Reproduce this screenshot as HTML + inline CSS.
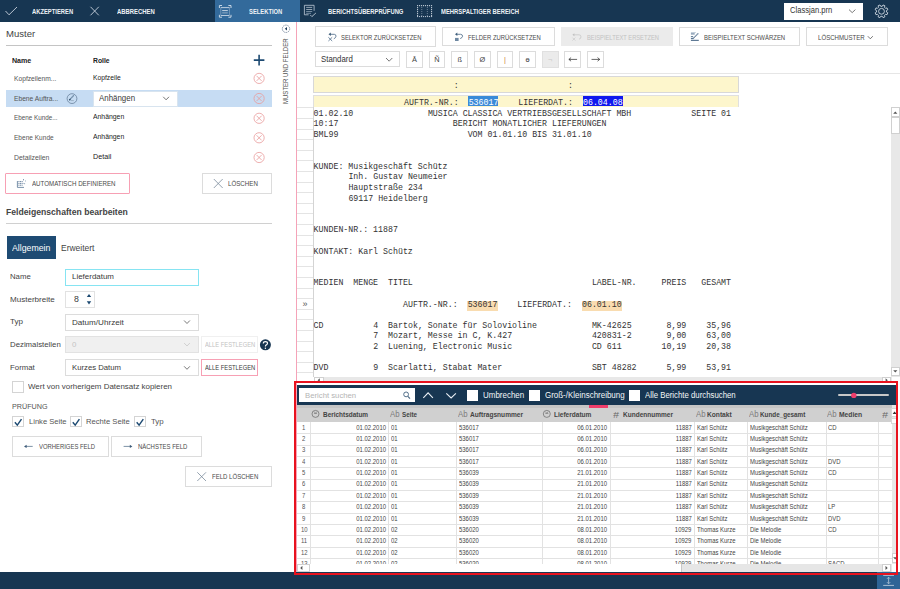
<!DOCTYPE html><html><head><meta charset='utf-8'><style>
*{margin:0;padding:0;box-sizing:border-box}
html,body{width:900px;height:589px;overflow:hidden;background:#fff;font-family:'Liberation Sans',sans-serif}
div{position:absolute}
.t{white-space:pre;line-height:1}
svg{position:absolute;overflow:visible}
</style></head><body><div style="left:0px;top:0px;width:900px;height:22.3px;background:#173652"></div>
<div style="left:215px;top:0px;width:85px;height:22.3px;background:#336a9b"></div>
<svg style="left:0;top:0" width="40" height="22"><path d="M5.5 11 L9 14.8 L17 7" fill="none" stroke="#c9d3de" stroke-width="0.9"/></svg>
<div class="t" style="left:32.2px;top:7.66px;font-size:6.9px;line-height:7.93px;color:#eef2f6;font-weight:700;font-family:'Liberation Sans';transform:scaleX(0.846);transform-origin:0 0;">AKZEPTIEREN</div>
<svg style="left:0;top:0" width="110" height="22"><path d="M90.5 6.8 L98.8 15.3 M98.8 6.8 L90.5 15.3" fill="none" stroke="#c9d3de" stroke-width="0.9"/></svg>
<div class="t" style="left:117.2px;top:7.66px;font-size:6.9px;line-height:7.93px;color:#eef2f6;font-weight:700;font-family:'Liberation Sans';transform:scaleX(0.857);transform-origin:0 0;">ABBRECHEN</div>
<svg style="left:0;top:0" width="240" height="22"><path d="M219.4 8 V5.5 H222 M228.4 5.5 H231 V8 M231 14.8 V17.2 H228.4 M222 17.2 H219.4 V14.8" fill="none" stroke="#d8e2ec" stroke-width="0.9"/><path d="M220.8 7.2 V15.8 M229.4 7.2 V15.8" stroke="#9fb6cc" stroke-width="0.6"/><path d="M221 7.6 H229.2 M221 15.5 H229.2" stroke="#c8d6e4" stroke-width="0.9"/><path d="M222.2 10.6 H227.8" stroke="#d8e2ec" stroke-width="0.9"/><path d="M222.2 12.9 H227.8" stroke="#9fb6cc" stroke-width="0.9"/></svg>
<div class="t" style="left:249.4px;top:7.66px;font-size:6.9px;line-height:7.93px;color:#eef2f6;font-weight:700;font-family:'Liberation Sans';transform:scaleX(0.845);transform-origin:0 0;">SELEKTION</div>
<svg style="left:0;top:0" width="340" height="22"><path d="M308.6 14.8 H304.4 V5.3 H314.1 V10.8" fill="none" stroke="#c0ccd8" stroke-width="0.8"/><path d="M306.2 7.4 H312.2 M306.2 9.5 H312.2" stroke="#c8d2dc" stroke-width="0.7"/><path d="M306.2 11.5 H312.2 M306.2 13.3 H311" stroke="#8ea2b6" stroke-width="0.8"/><path d="M310.3 15 L311.9 16.6 L315.9 13" fill="none" stroke="#d0dae4" stroke-width="0.8"/></svg>
<div class="t" style="left:327.6px;top:7.66px;font-size:6.9px;line-height:7.93px;color:#eef2f6;font-weight:700;font-family:'Liberation Sans';transform:scaleX(0.849);transform-origin:0 0;">BERICHTSÜBERPRÜFUNG</div>
<svg style="left:0;top:0" width="440" height="22"><rect x="417.00" y="5.1" width="1.1" height="1.1" fill="#c8d2dc"/><rect x="417.00" y="16.0" width="1.1" height="1.1" fill="#aebccb"/><rect x="419.00" y="5.1" width="1.1" height="1.1" fill="#c8d2dc"/><rect x="419.00" y="16.0" width="1.1" height="1.1" fill="#aebccb"/><rect x="421.00" y="5.1" width="1.1" height="1.1" fill="#c8d2dc"/><rect x="421.00" y="16.0" width="1.1" height="1.1" fill="#aebccb"/><rect x="423.00" y="5.1" width="1.1" height="1.1" fill="#c8d2dc"/><rect x="423.00" y="16.0" width="1.1" height="1.1" fill="#aebccb"/><rect x="425.00" y="5.1" width="1.1" height="1.1" fill="#c8d2dc"/><rect x="425.00" y="16.0" width="1.1" height="1.1" fill="#aebccb"/><rect x="427.00" y="5.1" width="1.1" height="1.1" fill="#c8d2dc"/><rect x="427.00" y="16.0" width="1.1" height="1.1" fill="#aebccb"/><rect x="429.00" y="5.1" width="1.1" height="1.1" fill="#c8d2dc"/><rect x="429.00" y="16.0" width="1.1" height="1.1" fill="#aebccb"/><rect x="431.00" y="5.1" width="1.1" height="1.1" fill="#c8d2dc"/><rect x="431.00" y="16.0" width="1.1" height="1.1" fill="#aebccb"/><rect x="417.0" y="7.10" width="1.1" height="1.1" fill="#c8d2dc"/><rect x="431.0" y="7.10" width="1.1" height="1.1" fill="#c8d2dc"/><rect x="421.2" y="7.10" width="1.1" height="0.9" fill="#6f8499"/><rect x="426.8" y="7.10" width="1.1" height="0.9" fill="#6f8499"/><rect x="417.0" y="9.10" width="1.1" height="1.1" fill="#c8d2dc"/><rect x="431.0" y="9.10" width="1.1" height="1.1" fill="#c8d2dc"/><rect x="421.2" y="9.10" width="1.1" height="0.9" fill="#6f8499"/><rect x="426.8" y="9.10" width="1.1" height="0.9" fill="#6f8499"/><rect x="417.0" y="11.10" width="1.1" height="1.1" fill="#c8d2dc"/><rect x="431.0" y="11.10" width="1.1" height="1.1" fill="#c8d2dc"/><rect x="421.2" y="11.10" width="1.1" height="0.9" fill="#6f8499"/><rect x="426.8" y="11.10" width="1.1" height="0.9" fill="#6f8499"/><rect x="417.0" y="13.10" width="1.1" height="1.1" fill="#c8d2dc"/><rect x="431.0" y="13.10" width="1.1" height="1.1" fill="#c8d2dc"/><rect x="421.2" y="13.10" width="1.1" height="0.9" fill="#6f8499"/><rect x="426.8" y="13.10" width="1.1" height="0.9" fill="#6f8499"/><rect x="417.0" y="15.10" width="1.1" height="1.1" fill="#c8d2dc"/><rect x="431.0" y="15.10" width="1.1" height="1.1" fill="#c8d2dc"/><rect x="421.2" y="15.10" width="1.1" height="0.9" fill="#6f8499"/><rect x="426.8" y="15.10" width="1.1" height="0.9" fill="#6f8499"/></svg>
<div class="t" style="left:440.8px;top:7.66px;font-size:6.9px;line-height:7.93px;color:#eef2f6;font-weight:700;font-family:'Liberation Sans';transform:scaleX(0.851);transform-origin:0 0;">MEHRSPALTIGER BEREICH</div>
<div style="left:784px;top:3px;width:79px;height:16.5px;background:#fff"></div>
<div class="t" style="left:789.8px;top:6.18px;font-size:8.2px;line-height:9.43px;color:#333;font-weight:400;font-family:'Liberation Sans';transform:scaleX(0.929);transform-origin:0 0;">Classjan.prn</div>
<svg style="left:0;top:0" width="900" height="22"><path d="M849 9.6 L852.2 12.6 L855.4 9.6" fill="none" stroke="#555" stroke-width="0.8"/></svg>
<svg style="left:0;top:0" width="900" height="22"><path d="M882.24 6.35 L883.02 4.98 L884.90 5.76 L884.47 7.28 L885.52 8.33 L887.04 7.90 L887.82 9.78 L886.45 10.56 L886.45 12.04 L887.82 12.82 L887.04 14.70 L885.52 14.27 L884.47 15.32 L884.90 16.84 L883.02 17.62 L882.24 16.25 L880.76 16.25 L879.98 17.62 L878.10 16.84 L878.53 15.32 L877.48 14.27 L875.96 14.70 L875.18 12.82 L876.55 12.04 L876.55 10.56 L875.18 9.78 L875.96 7.90 L877.48 8.33 L878.53 7.28 L878.10 5.76 L879.98 4.98 L880.76 6.35 Z" fill="none" stroke="#d8e0e8" stroke-width="0.85" stroke-linejoin="round"/><circle cx="881.5" cy="11.3" r="2.9" fill="none" stroke="#d8e0e8" stroke-width="0.85"/></svg>
<div class="t" style="left:6px;top:28.99px;font-size:9.4px;line-height:10.81px;color:#444;font-weight:400;font-family:'Liberation Sans';transform:scaleX(1.018);transform-origin:0 0;">Muster</div>
<div style="left:6px;top:45px;width:266px;height:1px;background:#c4c4c4"></div>
<div class="t" style="left:11.7px;top:57.06px;font-size:7px;line-height:8.05px;color:#222;font-weight:700;font-family:'Liberation Sans';transform:scaleX(1.013);transform-origin:0 0;">Name</div>
<div class="t" style="left:93px;top:57.06px;font-size:7px;line-height:8.05px;color:#222;font-weight:700;font-family:'Liberation Sans';transform:scaleX(0.969);transform-origin:0 0;">Rolle</div>
<svg style="left:0;top:0" width="1" height="1"><path d="M259.1 54.8 V65.4 M253.8 60.1 H264.4" stroke="#1d4a72" stroke-width="1.6"/></svg>
<div style="left:6px;top:90px;width:265.5px;height:17px;background:#c6dcf3"></div>
<div style="left:93px;top:90.5px;width:84.5px;height:16px;background:#fff;border:1px solid #d8e4ef"></div>
<div class="t" style="left:98.7px;top:93.98px;font-size:8.2px;line-height:9.43px;color:#3a3a3a;font-weight:400;font-family:'Liberation Sans';transform:scaleX(0.965);transform-origin:0 0;">Anhängen</div>
<svg style="left:0;top:0" width="1" height="1"><path d="M163.2 96.8 L166.1 99.8 L169.0 96.8" fill="none" stroke="#555" stroke-width="0.8"/></svg>
<svg style="left:0;top:0" width="1" height="1"><circle cx="72" cy="98.6" r="4.9" fill="none" stroke="#5c7690" stroke-width="0.7"/><path d="M69.6 99.8 L73.8 95.3" stroke="#4c6a86" stroke-width="1.2" stroke-dasharray="0.8 0.3"/><path d="M69.3 100.3 L70.3 99.3" stroke="#2c4a66" stroke-width="1.3"/><path d="M70.8 100.6 H73.8" stroke="#7d93a8" stroke-width="0.6"/></svg>
<div class="t" style="left:14.3px;top:75.07px;font-size:7px;line-height:8.05px;color:#555;font-weight:400;font-family:'Liberation Sans';transform:scaleX(0.955);transform-origin:0 0;">Kopfzeilenm...</div>
<div class="t" style="left:93px;top:74.07px;font-size:7px;line-height:8.05px;color:#222;font-weight:400;font-family:'Liberation Sans';transform:scaleX(0.961);transform-origin:0 0;">Kopfzeile</div>
<div class="t" style="left:14.3px;top:94.57px;font-size:7px;line-height:8.05px;color:#555;font-weight:400;font-family:'Liberation Sans';transform:scaleX(0.952);transform-origin:0 0;">Ebene Auftra...</div>
<div class="t" style="left:14.3px;top:114.47px;font-size:7px;line-height:8.05px;color:#555;font-weight:400;font-family:'Liberation Sans';transform:scaleX(0.904);transform-origin:0 0;">Ebene Kunde...</div>
<div class="t" style="left:93px;top:113.47px;font-size:7px;line-height:8.05px;color:#222;font-weight:400;font-family:'Liberation Sans';transform:scaleX(0.977);transform-origin:0 0;">Anhängen</div>
<div class="t" style="left:14.3px;top:134.16px;font-size:7px;line-height:8.05px;color:#555;font-weight:400;font-family:'Liberation Sans';transform:scaleX(0.935);transform-origin:0 0;">Ebene Kunde</div>
<div class="t" style="left:93px;top:133.16px;font-size:7px;line-height:8.05px;color:#222;font-weight:400;font-family:'Liberation Sans';transform:scaleX(0.977);transform-origin:0 0;">Anhängen</div>
<div class="t" style="left:14.3px;top:153.66px;font-size:7px;line-height:8.05px;color:#555;font-weight:400;font-family:'Liberation Sans';transform:scaleX(0.978);transform-origin:0 0;">Detailzeilen</div>
<div class="t" style="left:93px;top:152.66px;font-size:7px;line-height:8.05px;color:#222;font-weight:400;font-family:'Liberation Sans';transform:scaleX(1.023);transform-origin:0 0;">Detail</div>
<svg style="left:0;top:0" width="1" height="1"><circle cx="259.1" cy="78.4" r="5.1" fill="none" stroke="#e89a9a" stroke-width="0.8"/><path d="M256.55 75.85000000000001 L261.65000000000003 80.95 M261.65000000000003 75.85000000000001 L256.55 80.95" stroke="#e89a9a" stroke-width="0.8"/></svg>
<svg style="left:0;top:0" width="1" height="1"><circle cx="259.1" cy="98.5" r="5.1" fill="none" stroke="#e89a9a" stroke-width="0.8"/><path d="M256.55 95.95 L261.65000000000003 101.05 M261.65000000000003 95.95 L256.55 101.05" stroke="#e89a9a" stroke-width="0.8"/></svg>
<svg style="left:0;top:0" width="1" height="1"><circle cx="259.1" cy="118.3" r="5.1" fill="none" stroke="#e89a9a" stroke-width="0.8"/><path d="M256.55 115.75 L261.65000000000003 120.85 M261.65000000000003 115.75 L256.55 120.85" stroke="#e89a9a" stroke-width="0.8"/></svg>
<svg style="left:0;top:0" width="1" height="1"><circle cx="259.1" cy="137.8" r="5.1" fill="none" stroke="#e89a9a" stroke-width="0.8"/><path d="M256.55 135.25 L261.65000000000003 140.35000000000002 M261.65000000000003 135.25 L256.55 140.35000000000002" stroke="#e89a9a" stroke-width="0.8"/></svg>
<svg style="left:0;top:0" width="1" height="1"><circle cx="259.1" cy="157.5" r="5.1" fill="none" stroke="#e89a9a" stroke-width="0.8"/><path d="M256.55 154.95 L261.65000000000003 160.05 M261.65000000000003 154.95 L256.55 160.05" stroke="#e89a9a" stroke-width="0.8"/></svg>
<div style="left:5.2px;top:173px;width:124.8px;height:20.5px;border:1px solid #f7a0b4;border-radius:1px"></div>
<svg style="left:0;top:0" width="1" height="1"><path d="M17.4 181 V187.4 H24" fill="none" stroke="#6a84a0" stroke-width="0.9"/><path d="M18.4 181.6 H23.2 M18.4 183.4 H23.6 M18.4 185.2 H22.6" stroke="#6a84a0" stroke-width="1" stroke-dasharray="1.1 0.5"/><path d="M23.5 179 V180.4 M25.2 181.2 L26 180.6 M24.6 183.2 V184.2" stroke="#6a84a0" stroke-width="0.8"/></svg>
<div class="t" style="left:31.9px;top:180.36px;font-size:6.9px;line-height:7.93px;color:#4a4a4a;font-weight:400;font-family:'Liberation Sans';transform:scaleX(0.897);transform-origin:0 0;">AUTOMATISCH DEFINIEREN</div>
<div style="left:202.2px;top:173px;width:69.8px;height:20.5px;border:1px solid #dcdcdc"></div>
<svg style="left:0;top:0" width="1" height="1"><path d="M213.8 179 L222.70000000000002 188 M222.70000000000002 179 L213.8 188" stroke="#7a8a9a" stroke-width="0.8"/></svg>
<div class="t" style="left:228px;top:180.36px;font-size:6.9px;line-height:7.93px;color:#4a4a4a;font-weight:400;font-family:'Liberation Sans';transform:scaleX(0.897);transform-origin:0 0;">LÖSCHEN</div>
<div class="t" style="left:6px;top:208.42px;font-size:8.6px;line-height:9.89px;color:#444;font-weight:700;font-family:'Liberation Sans';transform:scaleX(1.004);transform-origin:0 0;">Feldeigenschaften bearbeiten</div>
<div style="left:6px;top:223px;width:266px;height:1px;background:#d0d0d0"></div>
<div style="left:7px;top:236.2px;width:48.5px;height:22.6px;background:#1e4b73"></div>
<div class="t" style="left:12.4px;top:243.90px;font-size:8.4px;line-height:9.66px;color:#fff;font-weight:400;font-family:'Liberation Sans';transform:scaleX(1.043);transform-origin:0 0;">Allgemein</div>
<div class="t" style="left:61.4px;top:243.90px;font-size:8.4px;line-height:9.66px;color:#444;font-weight:400;font-family:'Liberation Sans';transform:scaleX(1.009);transform-origin:0 0;">Erweitert</div>
<div class="t" style="left:10.1px;top:272.25px;font-size:7.9px;line-height:9.08px;color:#444;font-weight:400;font-family:'Liberation Sans';transform:scaleX(0.986);transform-origin:0 0;">Name</div>
<div class="t" style="left:10.1px;top:294.55px;font-size:7.9px;line-height:9.08px;color:#444;font-weight:400;font-family:'Liberation Sans';transform:scaleX(1.021);transform-origin:0 0;">Musterbreite</div>
<div class="t" style="left:10.1px;top:317.05px;font-size:7.9px;line-height:9.08px;color:#444;font-weight:400;font-family:'Liberation Sans';transform:scaleX(1.021);transform-origin:0 0;">Typ</div>
<div class="t" style="left:10.1px;top:340.35px;font-size:7.9px;line-height:9.08px;color:#444;font-weight:400;font-family:'Liberation Sans';transform:scaleX(0.989);transform-origin:0 0;">Dezimalstellen</div>
<div class="t" style="left:10.1px;top:362.95px;font-size:7.9px;line-height:9.08px;color:#444;font-weight:400;font-family:'Liberation Sans';transform:scaleX(0.991);transform-origin:0 0;">Format</div>
<div style="left:65.2px;top:268.5px;width:133.7px;height:17.1px;border:1px solid #86e4f2"></div>
<div class="t" style="left:72.3px;top:272.45px;font-size:7.9px;line-height:9.08px;color:#3a3a3a;font-weight:400;font-family:'Liberation Sans';transform:scaleX(1.007);transform-origin:0 0;">Lieferdatum</div>
<div style="left:65.2px;top:291.2px;width:29.4px;height:17.1px;border:1px solid #e2e2e2"></div>
<div class="t" style="left:73.6px;top:294.52px;font-size:8.6px;line-height:9.89px;color:#3a3a3a;font-weight:400;font-family:'Liberation Sans';transform:scaleX(1.020);transform-origin:0 0;">8</div>
<svg style="left:0;top:0" width="1" height="1"><path d="M86.8 297 L89 294 L91.2 297 Z M86.8 301.3 L89 304.4 L91.2 301.3 Z" fill="#1d4a72"/></svg>
<div style="left:65.2px;top:314.4px;width:133.7px;height:16.2px;border:1px solid #dcdcdc"></div>
<div class="t" style="left:71.8px;top:317.66px;font-size:8px;line-height:9.20px;color:#3a3a3a;font-weight:400;font-family:'Liberation Sans';transform:scaleX(1.013);transform-origin:0 0;">Datum/Uhrzeit</div>
<svg style="left:0;top:0" width="1" height="1"><path d="M184.1 320.5 L187.0 323.5 L189.9 320.5" fill="none" stroke="#555" stroke-width="0.8"/></svg>
<div style="left:65.2px;top:336.2px;width:133.7px;height:17.3px;border:1px solid #e2e2e2;background:#f0f0f0"></div>
<div class="t" style="left:72px;top:340.15px;font-size:7.9px;line-height:9.08px;color:#c4c4c4;font-weight:400;font-family:'Liberation Sans';">0</div>
<svg style="left:0;top:0" width="1" height="1"><path d="M184.1 343 L187.0 346 L189.9 343" fill="none" stroke="#c8c8c8" stroke-width="0.8"/></svg>
<div style="left:65.2px;top:359.2px;width:133.7px;height:16.4px;border:1px solid #dcdcdc"></div>
<div class="t" style="left:71.8px;top:362.66px;font-size:8px;line-height:9.20px;color:#3a3a3a;font-weight:400;font-family:'Liberation Sans';transform:scaleX(0.966);transform-origin:0 0;">Kurzes Datum</div>
<svg style="left:0;top:0" width="1" height="1"><path d="M184.1 366.3 L187.0 369.3 L189.9 366.3" fill="none" stroke="#555" stroke-width="0.8"/></svg>
<div style="left:201.3px;top:336.3px;width:56.8px;height:17px;border:1px solid #f0f0f0"></div>
<div class="t" style="left:205px;top:341.16px;font-size:6.9px;line-height:7.93px;color:#c2c2c2;font-weight:400;font-family:'Liberation Sans';transform:scaleX(0.840);transform-origin:0 0;">ALLE FESTLEGEN</div>
<svg style="left:0;top:0" width="1" height="1"><circle cx="265.4" cy="344.8" r="5.5" fill="#173652"/></svg>
<svg style="left:0;top:0" width="1" height="1"><path d="M263.3 343.5 Q263.3 341.6 265.4 341.6 Q267.5 341.6 267.5 343.3 Q267.5 344.5 266.2 345.1 Q265.4 345.6 265.4 346.6" fill="none" stroke="#fff" stroke-width="1.15"/><circle cx="265.4" cy="348.2" r="0.7" fill="#fff"/></svg>
<div style="left:201.3px;top:359.2px;width:56.8px;height:16.6px;border:1px solid #f7a0b4"></div>
<div class="t" style="left:205px;top:364.06px;font-size:6.9px;line-height:7.93px;color:#3a3a3a;font-weight:400;font-family:'Liberation Sans';transform:scaleX(0.840);transform-origin:0 0;">ALLE FESTLEGEN</div>
<div style="left:12.1px;top:381.3px;width:11.5px;height:11.5px;border:1px solid #d4d4d4;background:#fff"></div>
<div class="t" style="left:28.3px;top:382.35px;font-size:7.9px;line-height:9.08px;color:#444;font-weight:400;font-family:'Liberation Sans';transform:scaleX(1.005);transform-origin:0 0;">Wert von vorherigem Datensatz kopieren</div>
<div class="t" style="left:12.4px;top:403.28px;font-size:7.2px;line-height:8.28px;color:#555;font-weight:400;font-family:'Liberation Sans';transform:scaleX(1.003);transform-origin:0 0;">PRÜFUNG</div>
<div style="left:12.3px;top:415.9px;width:11.5px;height:11.5px;border:1px solid #d4d4d4;background:#fff"></div>
<svg style="left:0;top:0" width="1" height="1"><path d="M14.9 422.2 L17.3 425.09999999999997 L21.5 419.09999999999997" fill="none" stroke="#1d4a72" stroke-width="1.45"/></svg>
<div class="t" style="left:28.5px;top:417.05px;font-size:7.9px;line-height:9.08px;color:#555;font-weight:400;font-family:'Liberation Sans';transform:scaleX(0.961);transform-origin:0 0;">Linke Seite</div>
<div style="left:70.2px;top:415.9px;width:11.5px;height:11.5px;border:1px solid #d4d4d4;background:#fff"></div>
<svg style="left:0;top:0" width="1" height="1"><path d="M72.8 422.2 L75.2 425.09999999999997 L79.4 419.09999999999997" fill="none" stroke="#1d4a72" stroke-width="1.45"/></svg>
<div class="t" style="left:85.8px;top:417.05px;font-size:7.9px;line-height:9.08px;color:#555;font-weight:400;font-family:'Liberation Sans';transform:scaleX(0.968);transform-origin:0 0;">Rechte Seite</div>
<div style="left:134.1px;top:415.9px;width:11.5px;height:11.5px;border:1px solid #d4d4d4;background:#fff"></div>
<svg style="left:0;top:0" width="1" height="1"><path d="M136.7 422.2 L139.1 425.09999999999997 L143.29999999999998 419.09999999999997" fill="none" stroke="#1d4a72" stroke-width="1.45"/></svg>
<div class="t" style="left:150.6px;top:417.05px;font-size:7.9px;line-height:9.08px;color:#555;font-weight:400;font-family:'Liberation Sans';transform:scaleX(0.996);transform-origin:0 0;">Typ</div>
<div style="left:12.3px;top:436.1px;width:96.6px;height:20.6px;border:1px solid #dcdcdc"></div>
<svg style="left:0;top:0" width="1" height="1"><path d="M25.5 446.4 H32.7" stroke="#5c7690" stroke-width="0.8"/><path d="M24 446.4 L26.6 444.8 L26.6 448 Z" fill="#3c5a78"/></svg>
<div class="t" style="left:38.6px;top:443.26px;font-size:6.9px;line-height:7.93px;color:#4a4a4a;font-weight:400;font-family:'Liberation Sans';transform:scaleX(0.856);transform-origin:0 0;">VORHERIGES FELD</div>
<div style="left:111.3px;top:436.1px;width:90.8px;height:20.5px;border:1px solid #dcdcdc"></div>
<svg style="left:0;top:0" width="1" height="1"><path d="M123.6 446.4 H130.8" stroke="#5c7690" stroke-width="0.8"/><path d="M132.4 446.4 L129.8 444.8 L129.8 448 Z" fill="#3c5a78"/></svg>
<div class="t" style="left:138px;top:443.26px;font-size:6.9px;line-height:7.93px;color:#4a4a4a;font-weight:400;font-family:'Liberation Sans';transform:scaleX(0.866);transform-origin:0 0;">NÄCHSTES FELD</div>
<div style="left:185.3px;top:465.9px;width:86.9px;height:20.7px;border:1px solid #dcdcdc"></div>
<svg style="left:0;top:0" width="1" height="1"><path d="M197.3 472.3 L206.0 481.0 M206.0 472.3 L197.3 481.0" stroke="#7a8a9a" stroke-width="0.8"/></svg>
<div class="t" style="left:211.6px;top:473.36px;font-size:6.9px;line-height:7.93px;color:#4a4a4a;font-weight:400;font-family:'Liberation Sans';transform:scaleX(0.875);transform-origin:0 0;">FELD LÖSCHEN</div>
<svg style="left:0;top:0" width="1" height="1"><circle cx="286" cy="28.8" r="3.7" fill="none" stroke="#5a7088" stroke-width="0.7" stroke-dasharray="1.6 0.7"/><path d="M287 27 L284.8 28.8 L287 30.6 Z" fill="#1d3a58"/></svg>
<div class="t" style="left:280.5px;top:104px;width:66px;height:9px;transform:rotate(-90deg);transform-origin:0 0;font-size:7.3px;line-height:9px;color:#555;white-space:nowrap"><span style="display:inline-block;transform:scaleX(0.825);transform-origin:0 50%">MUSTER UND FELDER</span></div>
<div style="left:296px;top:22.3px;width:1px;height:567px;background:#f5a3b8"></div>
<div style="left:0px;top:571.7px;width:900px;height:17.3px;background:#173652"></div>
<div style="left:297px;top:73px;width:603px;height:1px;background:#e6e6e6"></div>
<div style="left:315.2px;top:26.4px;width:121.1px;height:20.3px;border:1px solid #dcdcdc;background:#fff"></div>
<svg style="left:0;top:0" width="1" height="1"><path d="M330 34.3 H334.3 Q336 34.4 336 36.2 Q336 37.8 333.8 38.8" fill="none" stroke="#5a7692" stroke-width="0.9"/><path d="M328.5 34.3 L330.8 32.6 L330.8 36 Z" fill="#3e5e7c"/><path d="M328.4 37.3 L332.2 41 M332.2 37.3 L328.4 41" stroke="#4a6886" stroke-width="0.8"/></svg>
<div class="t" style="left:341.3px;top:33.76px;font-size:6.9px;line-height:7.93px;color:#4a4a4a;font-weight:400;font-family:'Liberation Sans';transform:scaleX(0.852);transform-origin:0 0;">SELEKTOR ZURÜCKSETZEN</div>
<div style="left:442.2px;top:26.6px;width:112.7px;height:19.8px;border:1px solid #dcdcdc;background:#fff"></div>
<svg style="left:0;top:0" width="1" height="1"><path d="M456.5 34.3 H460.6 Q462.6 34.5 462.6 36.2 Q462.6 37.6 460.2 38.6" fill="none" stroke="#5a7692" stroke-width="0.9"/><path d="M455 34.3 L457.3 32.6 L457.3 36 Z" fill="#3e5e7c"/><rect x="455" y="37.9" width="3.6" height="3.1" fill="#6e88a2"/></svg>
<div class="t" style="left:467.8px;top:33.76px;font-size:6.9px;line-height:7.93px;color:#4a4a4a;font-weight:400;font-family:'Liberation Sans';transform:scaleX(0.855);transform-origin:0 0;">FELDER ZURÜCKSETZEN</div>
<div style="left:561.1px;top:26.6px;width:111.8px;height:19.8px;background:#ebebeb"></div>
<svg style="left:0;top:0" width="1" height="1"><path d="M573.5 34.8 H579 Q581 34.8 581 36.8 Q581 38.8 579 39.2" fill="none" stroke="#c8c8c8" stroke-width="0.8"/><path d="M572.4 34.8 L574.4 33.3 L574.4 36.3 Z" fill="#c0c0c0"/><path d="M572.4 37.6 L575.4 40.6 M575.4 37.6 L572.4 40.6" stroke="#c8c8c8" stroke-width="0.7"/></svg>
<div class="t" style="left:586.7px;top:33.76px;font-size:6.9px;line-height:7.93px;color:#c2c2c2;font-weight:400;font-family:'Liberation Sans';transform:scaleX(0.834);transform-origin:0 0;">BEISPIELTEXT ERSETZEN</div>
<div style="left:678.9px;top:26.6px;width:121.1px;height:19.8px;border:1px solid #dcdcdc;background:#fff"></div>
<svg style="left:0;top:0" width="1" height="1"><rect x="690.9" y="32" width="4.9" height="1" fill="#c4d0dc"/><rect x="690.9" y="33.3" width="3.8" height="1.2" fill="#6e88a2"/><rect x="690.9" y="36.1" width="2.2" height="1.1" fill="#5a7692"/><rect x="690.9" y="38" width="2.6" height="1.1" fill="#5a7692"/><rect x="690.9" y="39.8" width="7.9" height="1.1" fill="#4e6c8a"/><path d="M693.2 38.4 L698.4 33.2" stroke="#4e6c8a" stroke-width="1.2" stroke-dasharray="0.9 0.35"/></svg>
<div class="t" style="left:704.4px;top:33.76px;font-size:6.9px;line-height:7.93px;color:#4a4a4a;font-weight:400;font-family:'Liberation Sans';transform:scaleX(0.864);transform-origin:0 0;">BEISPIELTEXT SCHWÄRZEN</div>
<div style="left:806.2px;top:26.6px;width:81.6px;height:19.8px;border:1px solid #dcdcdc;background:#fff"></div>
<div class="t" style="left:817.8px;top:33.76px;font-size:6.9px;line-height:7.93px;color:#4a4a4a;font-weight:400;font-family:'Liberation Sans';transform:scaleX(0.885);transform-origin:0 0;">LÖSCHMUSTER</div>
<svg style="left:0;top:0" width="1" height="1"><path d="M867.8 36.2 L870.3 38.800000000000004 L872.8 36.2" fill="none" stroke="#555" stroke-width="0.8"/></svg>
<div style="left:315.2px;top:51.2px;width:84.5px;height:16.3px;border:1px solid #dcdcdc;background:#fff"></div>
<div class="t" style="left:320.7px;top:54.72px;font-size:8.6px;line-height:9.89px;color:#333;font-weight:400;font-family:'Liberation Sans';transform:scaleX(0.911);transform-origin:0 0;">Standard</div>
<svg style="left:0;top:0" width="1" height="1"><path d="M386 58 L389.15 61.2 L392.3 58" fill="none" stroke="#555" stroke-width="0.8"/></svg>
<div style="left:406.0px;top:51.1px;width:16.8px;height:16.7px;border:1px solid #dcdcdc;background:#fff"></div>
<div class="t" style="left:406.0px;top:53.8px;width:16.8px;text-align:center;font-size:7.4px;line-height:12px;color:#444">Ā</div>
<div style="left:428.64px;top:51.1px;width:16.8px;height:16.7px;border:1px solid #dcdcdc;background:#fff"></div>
<div class="t" style="left:428.64px;top:53.8px;width:16.8px;text-align:center;font-size:7.4px;line-height:12px;color:#444">Ñ</div>
<div style="left:451.28px;top:51.1px;width:16.8px;height:16.7px;border:1px solid #dcdcdc;background:#fff"></div>
<div class="t" style="left:451.28px;top:53.8px;width:16.8px;text-align:center;font-size:7.4px;line-height:12px;color:#444">ß</div>
<div style="left:473.92px;top:51.1px;width:16.8px;height:16.7px;border:1px solid #dcdcdc;background:#fff"></div>
<div class="t" style="left:473.92px;top:53.8px;width:16.8px;text-align:center;font-size:7.4px;line-height:12px;color:#444">Ø</div>
<div style="left:496.56px;top:51.1px;width:16.8px;height:16.7px;border:1px solid #dcdcdc;background:#fff"></div>
<div class="t" style="left:496.56px;top:53.8px;width:16.8px;text-align:center;font-size:7.4px;line-height:12px;color:#d08040">|</div>
<div style="left:519.2px;top:51.1px;width:16.8px;height:16.7px;border:1px solid #dcdcdc;background:#fff"></div>
<div class="t" style="left:519.2px;top:53.8px;width:16.8px;text-align:center;font-size:7.4px;line-height:12px;color:#444">ɵ</div>
<div style="left:541.84px;top:51.1px;width:16.8px;height:16.7px;border:1px solid #e0e0e0;background:#ebebeb"></div>
<div class="t" style="left:541.84px;top:53.8px;width:16.8px;text-align:center;font-size:7.4px;line-height:12px;color:#c8c8c8">¬</div>
<div style="left:564.48px;top:51.1px;width:16.8px;height:16.7px;border:1px solid #dcdcdc;background:#fff"></div>
<svg style="left:0;top:0" width="1" height="1"><path d="M568.88 59.4 H577.08 M568.88 59.4 L571.08 57.6 M568.88 59.4 L571.08 61.199999999999996" fill="none" stroke="#333" stroke-width="0.75"/></svg>
<div style="left:587.12px;top:51.1px;width:16.8px;height:16.7px;border:1px solid #dcdcdc;background:#fff"></div>
<svg style="left:0;top:0" width="1" height="1"><path d="M591.52 59.4 H599.72 M599.72 59.4 L597.52 57.6 M599.72 59.4 L597.52 61.199999999999996" fill="none" stroke="#333" stroke-width="0.75"/></svg>
<div style="left:313px;top:107px;width:1px;height:270px;background:#d4d4d4"></div>
<div style="left:297px;top:107.4px;width:16px;height:1px;background:#e4e4e4"></div>
<div style="left:297px;top:118.0px;width:16px;height:1px;background:#e4e4e4"></div>
<div style="left:297px;top:128.6px;width:16px;height:1px;background:#e4e4e4"></div>
<div style="left:297px;top:139.2px;width:16px;height:1px;background:#e4e4e4"></div>
<div style="left:297px;top:149.8px;width:16px;height:1px;background:#e4e4e4"></div>
<div style="left:297px;top:160.4px;width:16px;height:1px;background:#e4e4e4"></div>
<div style="left:297px;top:171.0px;width:16px;height:1px;background:#e4e4e4"></div>
<div style="left:297px;top:181.6px;width:16px;height:1px;background:#e4e4e4"></div>
<div style="left:297px;top:192.2px;width:16px;height:1px;background:#e4e4e4"></div>
<div style="left:297px;top:202.8px;width:16px;height:1px;background:#e4e4e4"></div>
<div style="left:297px;top:213.4px;width:16px;height:1px;background:#e4e4e4"></div>
<div style="left:297px;top:224.0px;width:16px;height:1px;background:#e4e4e4"></div>
<div style="left:297px;top:234.6px;width:16px;height:1px;background:#e4e4e4"></div>
<div style="left:297px;top:245.2px;width:16px;height:1px;background:#e4e4e4"></div>
<div style="left:297px;top:255.8px;width:16px;height:1px;background:#e4e4e4"></div>
<div style="left:297px;top:266.4px;width:16px;height:1px;background:#e4e4e4"></div>
<div style="left:297px;top:277.0px;width:16px;height:1px;background:#e4e4e4"></div>
<div style="left:297px;top:287.6px;width:16px;height:1px;background:#e4e4e4"></div>
<div style="left:297px;top:298.2px;width:16px;height:1px;background:#e4e4e4"></div>
<div style="left:297px;top:308.8px;width:16px;height:1px;background:#e4e4e4"></div>
<div style="left:297px;top:319.4px;width:16px;height:1px;background:#e4e4e4"></div>
<div style="left:297px;top:330.0px;width:16px;height:1px;background:#e4e4e4"></div>
<div style="left:297px;top:340.6px;width:16px;height:1px;background:#e4e4e4"></div>
<div style="left:297px;top:351.2px;width:16px;height:1px;background:#e4e4e4"></div>
<div style="left:297px;top:361.8px;width:16px;height:1px;background:#e4e4e4"></div>
<div style="left:297px;top:372.4px;width:16px;height:1px;background:#e4e4e4"></div>
<div style="left:313.2px;top:76px;width:425.8px;height:17px;background:#fdf6cc;border:1px solid #d8d8d8"></div>
<div style="left:313.2px;top:95.4px;width:425.8px;height:12px;background:#fdf6cc;border:1px solid #e0e0e0;border-bottom:none"></div>
<div class="t" style="left:453.75px;top:80.70px;font-family:'Liberation Mono';font-size:8.283px;line-height:10.6px;color:#333;">:</div>
<div class="t" style="left:568.06px;top:80.70px;font-family:'Liberation Mono';font-size:8.283px;line-height:10.6px;color:#333;">:</div>
<div class="t" style="left:404.05px;top:98.20px;font-family:'Liberation Mono';font-size:8.283px;line-height:10.6px;color:#333;">AUFTR.-NR.:</div>
<div style="left:468.47px;top:96.1px;width:29.8px;height:10px;background:#3a8ad8"></div>
<div class="t" style="left:468.66px;top:98.20px;font-family:'Liberation Mono';font-size:8.283px;line-height:10.6px;color:#fff;">536017</div>
<div class="t" style="left:518.36px;top:98.20px;font-family:'Liberation Mono';font-size:8.283px;line-height:10.6px;color:#333;">LIEFERDAT.:</div>
<div style="left:582.88px;top:96.1px;width:39.8px;height:10px;background:#1018ee"></div>
<div class="t" style="left:582.97px;top:98.20px;font-family:'Liberation Mono';font-size:8.283px;line-height:10.6px;color:#fff;">06.04.08</div>
<div class="t" style="left:313.60px;top:108.70px;font-family:'Liberation Mono';font-size:8.283px;line-height:10.6px;color:#333;">01.02.10</div>
<div class="t" style="left:427.91px;top:108.70px;font-family:'Liberation Mono';font-size:8.283px;line-height:10.6px;color:#333;">MUSICA CLASSICA VERTRIEBSGESELLSCHAFT MBH</div>
<div class="t" style="left:691.32px;top:108.70px;font-family:'Liberation Mono';font-size:8.283px;line-height:10.6px;color:#333;">SEITE 01</div>
<div class="t" style="left:313.60px;top:119.30px;font-family:'Liberation Mono';font-size:8.283px;line-height:10.6px;color:#333;">10:17</div>
<div class="t" style="left:452.76px;top:119.30px;font-family:'Liberation Mono';font-size:8.283px;line-height:10.6px;color:#333;">BERICHT MONATLICHER LIEFERUNGEN</div>
<div class="t" style="left:313.60px;top:129.90px;font-family:'Liberation Mono';font-size:8.283px;line-height:10.6px;color:#333;">BML99</div>
<div class="t" style="left:467.67px;top:129.90px;font-family:'Liberation Mono';font-size:8.283px;line-height:10.6px;color:#333;">VOM 01.01.10 BIS 31.01.10</div>
<div class="t" style="left:313.60px;top:161.70px;font-family:'Liberation Mono';font-size:8.283px;line-height:10.6px;color:#333;">KUNDE: Musikgeschäft Schütz</div>
<div class="t" style="left:348.39px;top:172.30px;font-family:'Liberation Mono';font-size:8.283px;line-height:10.6px;color:#333;">Inh. Gustav Neumeier</div>
<div class="t" style="left:348.39px;top:182.90px;font-family:'Liberation Mono';font-size:8.283px;line-height:10.6px;color:#333;">Hauptstraße 234</div>
<div class="t" style="left:348.39px;top:193.50px;font-family:'Liberation Mono';font-size:8.283px;line-height:10.6px;color:#333;">69117 Heidelberg</div>
<div class="t" style="left:313.60px;top:225.30px;font-family:'Liberation Mono';font-size:8.283px;line-height:10.6px;color:#333;">KUNDEN-NR.: 11887</div>
<div class="t" style="left:313.60px;top:246.50px;font-family:'Liberation Mono';font-size:8.283px;line-height:10.6px;color:#333;">KONTAKT: Karl Schütz</div>
<div class="t" style="left:313.60px;top:278.30px;font-family:'Liberation Mono';font-size:8.283px;line-height:10.6px;color:#333;">MEDIEN  MENGE  TITEL</div>
<div class="t" style="left:591.92px;top:278.30px;font-family:'Liberation Mono';font-size:8.283px;line-height:10.6px;color:#333;">LABEL-NR.</div>
<div class="t" style="left:661.50px;top:278.30px;font-family:'Liberation Mono';font-size:8.283px;line-height:10.6px;color:#333;">PREIS</div>
<div class="t" style="left:701.26px;top:278.30px;font-family:'Liberation Mono';font-size:8.283px;line-height:10.6px;color:#333;">GESAMT</div>
<div class="t" style="left:403.06px;top:299.50px;font-family:'Liberation Mono';font-size:8.283px;line-height:10.6px;color:#333;">AUFTR.-NR.:</div>
<div class="t" style="left:517.37px;top:299.50px;font-family:'Liberation Mono';font-size:8.283px;line-height:10.6px;color:#333;">LIEFERDAT.:</div>
<div class="t" style="left:313.60px;top:320.70px;font-family:'Liberation Mono';font-size:8.283px;line-height:10.6px;color:#333;">CD</div>
<div class="t" style="left:373.24px;top:320.70px;font-family:'Liberation Mono';font-size:8.283px;line-height:10.6px;color:#333;">4  Bartok, Sonate für Solovioline</div>
<div class="t" style="left:591.92px;top:320.70px;font-family:'Liberation Mono';font-size:8.283px;line-height:10.6px;color:#333;">MK-42625</div>
<div class="t" style="left:666.47px;top:320.70px;font-family:'Liberation Mono';font-size:8.283px;line-height:10.6px;color:#333;">8,99</div>
<div class="t" style="left:706.23px;top:320.70px;font-family:'Liberation Mono';font-size:8.283px;line-height:10.6px;color:#333;">35,96</div>
<div class="t" style="left:373.24px;top:331.30px;font-family:'Liberation Mono';font-size:8.283px;line-height:10.6px;color:#333;">7  Mozart, Messe in C, K.427</div>
<div class="t" style="left:591.92px;top:331.30px;font-family:'Liberation Mono';font-size:8.283px;line-height:10.6px;color:#333;">420831-2</div>
<div class="t" style="left:666.47px;top:331.30px;font-family:'Liberation Mono';font-size:8.283px;line-height:10.6px;color:#333;">9,00</div>
<div class="t" style="left:706.23px;top:331.30px;font-family:'Liberation Mono';font-size:8.283px;line-height:10.6px;color:#333;">63,00</div>
<div class="t" style="left:373.24px;top:341.90px;font-family:'Liberation Mono';font-size:8.283px;line-height:10.6px;color:#333;">2  Luening, Electronic Music</div>
<div class="t" style="left:591.92px;top:341.90px;font-family:'Liberation Mono';font-size:8.283px;line-height:10.6px;color:#333;">CD 611</div>
<div class="t" style="left:661.50px;top:341.90px;font-family:'Liberation Mono';font-size:8.283px;line-height:10.6px;color:#333;">10,19</div>
<div class="t" style="left:706.23px;top:341.90px;font-family:'Liberation Mono';font-size:8.283px;line-height:10.6px;color:#333;">20,38</div>
<div class="t" style="left:313.60px;top:363.10px;font-family:'Liberation Mono';font-size:8.283px;line-height:10.6px;color:#333;">DVD</div>
<div class="t" style="left:373.24px;top:363.10px;font-family:'Liberation Mono';font-size:8.283px;line-height:10.6px;color:#333;">9  Scarlatti, Stabat Mater</div>
<div class="t" style="left:591.92px;top:363.10px;font-family:'Liberation Mono';font-size:8.283px;line-height:10.6px;color:#333;">SBT 48282</div>
<div class="t" style="left:666.47px;top:363.10px;font-family:'Liberation Mono';font-size:8.283px;line-height:10.6px;color:#333;">5,99</div>
<div class="t" style="left:706.23px;top:363.10px;font-family:'Liberation Mono';font-size:8.283px;line-height:10.6px;color:#333;">53,91</div>
<div style="left:467.27000000000004px;top:300.7px;width:30.42px;height:10.5px;background:#f9dcb0"></div>
<div class="t" style="left:467.67px;top:299.50px;font-family:'Liberation Mono';font-size:8.283px;line-height:10.6px;color:#333;">536017</div>
<div style="left:581.58px;top:300.7px;width:40.36px;height:10.5px;background:#f9dcb0"></div>
<div class="t" style="left:581.98px;top:299.50px;font-family:'Liberation Mono';font-size:8.283px;line-height:10.6px;color:#333;">06.01.10</div>
<div class="t" style="left:302.6px;top:298.90px;font-size:9px;line-height:10px;color:#555">»</div>
<div style="left:891px;top:107px;width:8.5px;height:270px;background:#e8e8e8"></div>
<div style="left:891px;top:107px;width:8.5px;height:10.3px;background:#fff;border:1px solid #d0d0d0"></div>
<div style="left:891px;top:117.2px;width:8.5px;height:16.5px;background:#fff;border:1px solid #d0d0d0"></div>
<div style="left:891px;top:366.8px;width:8.5px;height:9.6px;background:#fff;border:1px solid #d0d0d0"></div>
<svg style="left:0;top:0" width="1" height="1"><path d="M893.2 113.8 L895.3 111.5 L897.4 113.8 Z M893.2 370.3 L895.3 372.6 L897.4 370.3 Z" fill="#555"/></svg>
<div style="left:313.6px;top:377px;width:578px;height:4.5px;background:#e8e8e8"></div>
<div style="left:313.6px;top:377px;width:10px;height:4.5px;background:#fff;border:1px solid #d0d0d0;border-bottom:none"></div>
<div style="left:881.8px;top:377px;width:9.7px;height:4.5px;background:#fff;border:1px solid #d0d0d0;border-bottom:none"></div>
<svg style="left:0;top:0" width="1" height="1"><path d="M319.8 378.2 L317.6 380.2 L319.8 382.2 Z M885.6 378.2 L887.8 380.2 L885.6 382.2 Z" fill="#555"/></svg>
<div style="left:294px;top:381.2px;width:604.2px;height:193.8px;border:2px solid #e8121e"></div>
<div style="left:296.5px;top:385px;width:600px;height:20px;background:#173652"></div>
<div style="left:299.2px;top:388px;width:115.8px;height:14.2px;background:#fff"></div>
<div class="t" style="left:304.8px;top:390.96px;font-size:8px;line-height:9.20px;color:#b4b4b4;font-weight:400;font-family:'Liberation Sans';transform:scaleX(0.967);transform-origin:0 0;">Bericht suchen</div>
<svg style="left:0;top:0" width="1" height="1"><circle cx="406.1" cy="394.4" r="2.4" fill="none" stroke="#4a6884" stroke-width="0.95"/><path d="M407.9 396.3 L410 398.6" stroke="#4a6884" stroke-width="1.1"/></svg>
<svg style="left:0;top:0" width="1" height="1"><path d="M423.3 397.9 L428.1 392.8 L432.9 397.9 M446.3 393.3 L451.1 398 L455.9 393.3" fill="none" stroke="#e8eef4" stroke-width="1.1"/></svg>
<div style="left:466.6px;top:389.8px;width:11.2px;height:11.2px;background:#fff"></div>
<div class="t" style="left:482.6px;top:391.30px;font-size:8.4px;line-height:9.66px;color:#f4f6f8;font-weight:400;font-family:'Liberation Sans';transform:scaleX(0.951);transform-origin:0 0;">Umbrechen</div>
<div style="left:528.8px;top:389.8px;width:11.2px;height:11.2px;background:#fff"></div>
<div class="t" style="left:544.5px;top:391.30px;font-size:8.4px;line-height:9.66px;color:#f4f6f8;font-weight:400;font-family:'Liberation Sans';transform:scaleX(0.950);transform-origin:0 0;">Groß-/Kleinschreibung</div>
<div style="left:629.3px;top:389.8px;width:11.2px;height:11.2px;background:#fff"></div>
<div class="t" style="left:645.3px;top:391.30px;font-size:8.4px;line-height:9.66px;color:#f4f6f8;font-weight:400;font-family:'Liberation Sans';transform:scaleX(0.932);transform-origin:0 0;">Alle Berichte durchsuchen</div>
<div style="left:838px;top:394.4px;width:51px;height:2px;background:#c8c8c8;border-radius:1px"></div>
<svg style="left:0;top:0" width="1" height="1"><circle cx="853.8" cy="395.4" r="2.7" fill="#ef3d6b"/></svg>
<div style="left:296.5px;top:405px;width:595px;height:17.8px;background:#d0d0d0"></div>
<div style="left:296.5px;top:405px;width:595px;height:3px;background:#c5c5c5"></div>
<div style="left:588.9px;top:405px;width:19px;height:2.8px;background:#ef3d6b"></div>
<svg style="left:0;top:0" width="1" height="1"><circle cx="315.5" cy="413.9" r="3.5" fill="none" stroke="#666" stroke-width="0.7"/><path d="M314.2 411.7 L315.5 413.29999999999995 L316.8 411.7 M314.0 413.5 H317.0" fill="none" stroke="#707070" stroke-width="0.6"/></svg>
<div class="t" style="left:322.7px;top:411.06px;font-size:7px;line-height:8.05px;color:#444;font-weight:700;font-family:'Liberation Sans';transform:scaleX(0.919);transform-origin:0 0;">Berichtsdatum</div>
<div class="t" style="left:389.8px;top:409.98px;font-size:8.2px;line-height:9.43px;color:#7c7c7c;font-weight:400;font-family:'Liberation Sans';transform:scaleX(0.955);transform-origin:0 0;">Ab</div>
<div class="t" style="left:401.6px;top:411.06px;font-size:7px;line-height:8.05px;color:#444;font-weight:700;font-family:'Liberation Sans';transform:scaleX(0.898);transform-origin:0 0;">Seite</div>
<div class="t" style="left:458.2px;top:409.98px;font-size:8.2px;line-height:9.43px;color:#7c7c7c;font-weight:400;font-family:'Liberation Sans';transform:scaleX(0.955);transform-origin:0 0;">Ab</div>
<div class="t" style="left:469.8px;top:411.06px;font-size:7px;line-height:8.05px;color:#444;font-weight:700;font-family:'Liberation Sans';transform:scaleX(0.941);transform-origin:0 0;">Auftragsnummer</div>
<svg style="left:0;top:0" width="1" height="1"><circle cx="546.8" cy="413.9" r="3.5" fill="none" stroke="#666" stroke-width="0.7"/><path d="M545.5 411.7 L546.8 413.29999999999995 L548.0999999999999 411.7 M545.3 413.5 H548.3" fill="none" stroke="#707070" stroke-width="0.6"/></svg>
<div class="t" style="left:554.4px;top:411.06px;font-size:7px;line-height:8.05px;color:#444;font-weight:700;font-family:'Liberation Sans';transform:scaleX(0.932);transform-origin:0 0;">Lieferdatum</div>
<div class="t" style="left:613.3px;top:409.86px;font-size:9px;line-height:10.35px;color:#6a6a6a;font-weight:400;font-family:'Liberation Sans';transform:scaleX(1.169);transform-origin:0 0;font-style:italic;">#</div>
<div class="t" style="left:622.9px;top:411.06px;font-size:7px;line-height:8.05px;color:#444;font-weight:700;font-family:'Liberation Sans';transform:scaleX(0.931);transform-origin:0 0;">Kundennummer</div>
<div class="t" style="left:695.9px;top:409.98px;font-size:8.2px;line-height:9.43px;color:#7c7c7c;font-weight:400;font-family:'Liberation Sans';transform:scaleX(0.955);transform-origin:0 0;">Ab</div>
<div class="t" style="left:706.9px;top:411.06px;font-size:7px;line-height:8.05px;color:#444;font-weight:700;font-family:'Liberation Sans';transform:scaleX(0.947);transform-origin:0 0;">Kontakt</div>
<div class="t" style="left:748.5px;top:409.98px;font-size:8.2px;line-height:9.43px;color:#7c7c7c;font-weight:400;font-family:'Liberation Sans';transform:scaleX(0.955);transform-origin:0 0;">Ab</div>
<div class="t" style="left:760px;top:411.06px;font-size:7px;line-height:8.05px;color:#444;font-weight:700;font-family:'Liberation Sans';transform:scaleX(0.903);transform-origin:0 0;">Kunde_gesamt</div>
<div class="t" style="left:827.4px;top:409.98px;font-size:8.2px;line-height:9.43px;color:#7c7c7c;font-weight:400;font-family:'Liberation Sans';transform:scaleX(0.955);transform-origin:0 0;">Ab</div>
<div class="t" style="left:838.9px;top:411.06px;font-size:7px;line-height:8.05px;color:#444;font-weight:700;font-family:'Liberation Sans';transform:scaleX(0.961);transform-origin:0 0;">Medien</div>
<div class="t" style="left:881.7px;top:409.86px;font-size:9px;line-height:10.35px;color:#6a6a6a;font-weight:400;font-family:'Liberation Sans';transform:scaleX(1.169);transform-origin:0 0;font-style:italic;">#</div>
<div style="left:296.5px;top:422.3px;width:595px;height:141.4px;overflow:hidden;background:#fff">
<div style="left:0;top:10.95px;width:595px;height:1px;background:#e2e2e2"></div>
<div class="t" style="left:5.90px;top:1.43px;font-size:6.6px;line-height:7.59px;color:#555;transform:scaleX(0.9);transform-origin:0 0">1</div>
<div class="t" style="left:-30.50px;width:120px;text-align:right;top:1.43px;font-size:6.6px;line-height:7.59px;color:#444"><span style="display:inline-block;transform:scaleX(0.9);transform-origin:100% 0">01.02.2010</span></div>
<div class="t" style="left:94.60px;top:1.43px;font-size:6.6px;line-height:7.59px;color:#444;transform:scaleX(0.9);transform-origin:0 0">01</div>
<div class="t" style="left:162.80px;top:1.43px;font-size:6.6px;line-height:7.59px;color:#444;transform:scaleX(0.9);transform-origin:0 0">536017</div>
<div class="t" style="left:190.60px;width:120px;text-align:right;top:1.43px;font-size:6.6px;line-height:7.59px;color:#444"><span style="display:inline-block;transform:scaleX(0.9);transform-origin:100% 0">06.01.2010</span></div>
<div class="t" style="left:275.00px;width:120px;text-align:right;top:1.43px;font-size:6.6px;line-height:7.59px;color:#444"><span style="display:inline-block;transform:scaleX(0.9);transform-origin:100% 0">11887</span></div>
<div class="t" style="left:400.10px;top:1.43px;font-size:6.6px;line-height:7.59px;color:#444;transform:scaleX(0.9);transform-origin:0 0">Karl Schütz</div>
<div class="t" style="left:453.20px;top:1.43px;font-size:6.6px;line-height:7.59px;color:#444;transform:scaleX(0.9);transform-origin:0 0">Musikgeschäft Schütz</div>
<div class="t" style="left:531.40px;top:1.43px;font-size:6.6px;line-height:7.59px;color:#444;transform:scaleX(0.9);transform-origin:0 0">CD</div>
<div style="left:0;top:22.30px;width:595px;height:1px;background:#e2e2e2"></div>
<div class="t" style="left:5.90px;top:12.78px;font-size:6.6px;line-height:7.59px;color:#555;transform:scaleX(0.9);transform-origin:0 0">2</div>
<div class="t" style="left:-30.50px;width:120px;text-align:right;top:12.78px;font-size:6.6px;line-height:7.59px;color:#444"><span style="display:inline-block;transform:scaleX(0.9);transform-origin:100% 0">01.02.2010</span></div>
<div class="t" style="left:94.60px;top:12.78px;font-size:6.6px;line-height:7.59px;color:#444;transform:scaleX(0.9);transform-origin:0 0">01</div>
<div class="t" style="left:162.80px;top:12.78px;font-size:6.6px;line-height:7.59px;color:#444;transform:scaleX(0.9);transform-origin:0 0">536017</div>
<div class="t" style="left:190.60px;width:120px;text-align:right;top:12.78px;font-size:6.6px;line-height:7.59px;color:#444"><span style="display:inline-block;transform:scaleX(0.9);transform-origin:100% 0">06.01.2010</span></div>
<div class="t" style="left:275.00px;width:120px;text-align:right;top:12.78px;font-size:6.6px;line-height:7.59px;color:#444"><span style="display:inline-block;transform:scaleX(0.9);transform-origin:100% 0">11887</span></div>
<div class="t" style="left:400.10px;top:12.78px;font-size:6.6px;line-height:7.59px;color:#444;transform:scaleX(0.9);transform-origin:0 0">Karl Schütz</div>
<div class="t" style="left:453.20px;top:12.78px;font-size:6.6px;line-height:7.59px;color:#444;transform:scaleX(0.9);transform-origin:0 0">Musikgeschäft Schütz</div>
<div class="t" style="left:531.40px;top:12.78px;font-size:6.6px;line-height:7.59px;color:#444;transform:scaleX(0.9);transform-origin:0 0"></div>
<div style="left:0;top:33.65px;width:595px;height:1px;background:#e2e2e2"></div>
<div class="t" style="left:5.90px;top:24.13px;font-size:6.6px;line-height:7.59px;color:#555;transform:scaleX(0.9);transform-origin:0 0">3</div>
<div class="t" style="left:-30.50px;width:120px;text-align:right;top:24.13px;font-size:6.6px;line-height:7.59px;color:#444"><span style="display:inline-block;transform:scaleX(0.9);transform-origin:100% 0">01.02.2010</span></div>
<div class="t" style="left:94.60px;top:24.13px;font-size:6.6px;line-height:7.59px;color:#444;transform:scaleX(0.9);transform-origin:0 0">01</div>
<div class="t" style="left:162.80px;top:24.13px;font-size:6.6px;line-height:7.59px;color:#444;transform:scaleX(0.9);transform-origin:0 0">536017</div>
<div class="t" style="left:190.60px;width:120px;text-align:right;top:24.13px;font-size:6.6px;line-height:7.59px;color:#444"><span style="display:inline-block;transform:scaleX(0.9);transform-origin:100% 0">06.01.2010</span></div>
<div class="t" style="left:275.00px;width:120px;text-align:right;top:24.13px;font-size:6.6px;line-height:7.59px;color:#444"><span style="display:inline-block;transform:scaleX(0.9);transform-origin:100% 0">11887</span></div>
<div class="t" style="left:400.10px;top:24.13px;font-size:6.6px;line-height:7.59px;color:#444;transform:scaleX(0.9);transform-origin:0 0">Karl Schütz</div>
<div class="t" style="left:453.20px;top:24.13px;font-size:6.6px;line-height:7.59px;color:#444;transform:scaleX(0.9);transform-origin:0 0">Musikgeschäft Schütz</div>
<div class="t" style="left:531.40px;top:24.13px;font-size:6.6px;line-height:7.59px;color:#444;transform:scaleX(0.9);transform-origin:0 0"></div>
<div style="left:0;top:45.00px;width:595px;height:1px;background:#e2e2e2"></div>
<div class="t" style="left:5.90px;top:35.48px;font-size:6.6px;line-height:7.59px;color:#555;transform:scaleX(0.9);transform-origin:0 0">4</div>
<div class="t" style="left:-30.50px;width:120px;text-align:right;top:35.48px;font-size:6.6px;line-height:7.59px;color:#444"><span style="display:inline-block;transform:scaleX(0.9);transform-origin:100% 0">01.02.2010</span></div>
<div class="t" style="left:94.60px;top:35.48px;font-size:6.6px;line-height:7.59px;color:#444;transform:scaleX(0.9);transform-origin:0 0">01</div>
<div class="t" style="left:162.80px;top:35.48px;font-size:6.6px;line-height:7.59px;color:#444;transform:scaleX(0.9);transform-origin:0 0">536017</div>
<div class="t" style="left:190.60px;width:120px;text-align:right;top:35.48px;font-size:6.6px;line-height:7.59px;color:#444"><span style="display:inline-block;transform:scaleX(0.9);transform-origin:100% 0">06.01.2010</span></div>
<div class="t" style="left:275.00px;width:120px;text-align:right;top:35.48px;font-size:6.6px;line-height:7.59px;color:#444"><span style="display:inline-block;transform:scaleX(0.9);transform-origin:100% 0">11887</span></div>
<div class="t" style="left:400.10px;top:35.48px;font-size:6.6px;line-height:7.59px;color:#444;transform:scaleX(0.9);transform-origin:0 0">Karl Schütz</div>
<div class="t" style="left:453.20px;top:35.48px;font-size:6.6px;line-height:7.59px;color:#444;transform:scaleX(0.9);transform-origin:0 0">Musikgeschäft Schütz</div>
<div class="t" style="left:531.40px;top:35.48px;font-size:6.6px;line-height:7.59px;color:#444;transform:scaleX(0.9);transform-origin:0 0">DVD</div>
<div style="left:0;top:56.35px;width:595px;height:1px;background:#e2e2e2"></div>
<div class="t" style="left:5.90px;top:46.83px;font-size:6.6px;line-height:7.59px;color:#555;transform:scaleX(0.9);transform-origin:0 0">5</div>
<div class="t" style="left:-30.50px;width:120px;text-align:right;top:46.83px;font-size:6.6px;line-height:7.59px;color:#444"><span style="display:inline-block;transform:scaleX(0.9);transform-origin:100% 0">01.02.2010</span></div>
<div class="t" style="left:94.60px;top:46.83px;font-size:6.6px;line-height:7.59px;color:#444;transform:scaleX(0.9);transform-origin:0 0">01</div>
<div class="t" style="left:162.80px;top:46.83px;font-size:6.6px;line-height:7.59px;color:#444;transform:scaleX(0.9);transform-origin:0 0">536039</div>
<div class="t" style="left:190.60px;width:120px;text-align:right;top:46.83px;font-size:6.6px;line-height:7.59px;color:#444"><span style="display:inline-block;transform:scaleX(0.9);transform-origin:100% 0">21.01.2010</span></div>
<div class="t" style="left:275.00px;width:120px;text-align:right;top:46.83px;font-size:6.6px;line-height:7.59px;color:#444"><span style="display:inline-block;transform:scaleX(0.9);transform-origin:100% 0">11887</span></div>
<div class="t" style="left:400.10px;top:46.83px;font-size:6.6px;line-height:7.59px;color:#444;transform:scaleX(0.9);transform-origin:0 0">Karl Schütz</div>
<div class="t" style="left:453.20px;top:46.83px;font-size:6.6px;line-height:7.59px;color:#444;transform:scaleX(0.9);transform-origin:0 0">Musikgeschäft Schütz</div>
<div class="t" style="left:531.40px;top:46.83px;font-size:6.6px;line-height:7.59px;color:#444;transform:scaleX(0.9);transform-origin:0 0">CD</div>
<div style="left:0;top:67.70px;width:595px;height:1px;background:#e2e2e2"></div>
<div class="t" style="left:5.90px;top:58.18px;font-size:6.6px;line-height:7.59px;color:#555;transform:scaleX(0.9);transform-origin:0 0">6</div>
<div class="t" style="left:-30.50px;width:120px;text-align:right;top:58.18px;font-size:6.6px;line-height:7.59px;color:#444"><span style="display:inline-block;transform:scaleX(0.9);transform-origin:100% 0">01.02.2010</span></div>
<div class="t" style="left:94.60px;top:58.18px;font-size:6.6px;line-height:7.59px;color:#444;transform:scaleX(0.9);transform-origin:0 0">01</div>
<div class="t" style="left:162.80px;top:58.18px;font-size:6.6px;line-height:7.59px;color:#444;transform:scaleX(0.9);transform-origin:0 0">536039</div>
<div class="t" style="left:190.60px;width:120px;text-align:right;top:58.18px;font-size:6.6px;line-height:7.59px;color:#444"><span style="display:inline-block;transform:scaleX(0.9);transform-origin:100% 0">21.01.2010</span></div>
<div class="t" style="left:275.00px;width:120px;text-align:right;top:58.18px;font-size:6.6px;line-height:7.59px;color:#444"><span style="display:inline-block;transform:scaleX(0.9);transform-origin:100% 0">11887</span></div>
<div class="t" style="left:400.10px;top:58.18px;font-size:6.6px;line-height:7.59px;color:#444;transform:scaleX(0.9);transform-origin:0 0">Karl Schütz</div>
<div class="t" style="left:453.20px;top:58.18px;font-size:6.6px;line-height:7.59px;color:#444;transform:scaleX(0.9);transform-origin:0 0">Musikgeschäft Schütz</div>
<div class="t" style="left:531.40px;top:58.18px;font-size:6.6px;line-height:7.59px;color:#444;transform:scaleX(0.9);transform-origin:0 0"></div>
<div style="left:0;top:79.05px;width:595px;height:1px;background:#e2e2e2"></div>
<div class="t" style="left:5.90px;top:69.53px;font-size:6.6px;line-height:7.59px;color:#555;transform:scaleX(0.9);transform-origin:0 0">7</div>
<div class="t" style="left:-30.50px;width:120px;text-align:right;top:69.53px;font-size:6.6px;line-height:7.59px;color:#444"><span style="display:inline-block;transform:scaleX(0.9);transform-origin:100% 0">01.02.2010</span></div>
<div class="t" style="left:94.60px;top:69.53px;font-size:6.6px;line-height:7.59px;color:#444;transform:scaleX(0.9);transform-origin:0 0">01</div>
<div class="t" style="left:162.80px;top:69.53px;font-size:6.6px;line-height:7.59px;color:#444;transform:scaleX(0.9);transform-origin:0 0">536039</div>
<div class="t" style="left:190.60px;width:120px;text-align:right;top:69.53px;font-size:6.6px;line-height:7.59px;color:#444"><span style="display:inline-block;transform:scaleX(0.9);transform-origin:100% 0">21.01.2010</span></div>
<div class="t" style="left:275.00px;width:120px;text-align:right;top:69.53px;font-size:6.6px;line-height:7.59px;color:#444"><span style="display:inline-block;transform:scaleX(0.9);transform-origin:100% 0">11887</span></div>
<div class="t" style="left:400.10px;top:69.53px;font-size:6.6px;line-height:7.59px;color:#444;transform:scaleX(0.9);transform-origin:0 0">Karl Schütz</div>
<div class="t" style="left:453.20px;top:69.53px;font-size:6.6px;line-height:7.59px;color:#444;transform:scaleX(0.9);transform-origin:0 0">Musikgeschäft Schütz</div>
<div class="t" style="left:531.40px;top:69.53px;font-size:6.6px;line-height:7.59px;color:#444;transform:scaleX(0.9);transform-origin:0 0"></div>
<div style="left:0;top:90.40px;width:595px;height:1px;background:#e2e2e2"></div>
<div class="t" style="left:5.90px;top:80.88px;font-size:6.6px;line-height:7.59px;color:#555;transform:scaleX(0.9);transform-origin:0 0">8</div>
<div class="t" style="left:-30.50px;width:120px;text-align:right;top:80.88px;font-size:6.6px;line-height:7.59px;color:#444"><span style="display:inline-block;transform:scaleX(0.9);transform-origin:100% 0">01.02.2010</span></div>
<div class="t" style="left:94.60px;top:80.88px;font-size:6.6px;line-height:7.59px;color:#444;transform:scaleX(0.9);transform-origin:0 0">01</div>
<div class="t" style="left:162.80px;top:80.88px;font-size:6.6px;line-height:7.59px;color:#444;transform:scaleX(0.9);transform-origin:0 0">536039</div>
<div class="t" style="left:190.60px;width:120px;text-align:right;top:80.88px;font-size:6.6px;line-height:7.59px;color:#444"><span style="display:inline-block;transform:scaleX(0.9);transform-origin:100% 0">21.01.2010</span></div>
<div class="t" style="left:275.00px;width:120px;text-align:right;top:80.88px;font-size:6.6px;line-height:7.59px;color:#444"><span style="display:inline-block;transform:scaleX(0.9);transform-origin:100% 0">11887</span></div>
<div class="t" style="left:400.10px;top:80.88px;font-size:6.6px;line-height:7.59px;color:#444;transform:scaleX(0.9);transform-origin:0 0">Karl Schütz</div>
<div class="t" style="left:453.20px;top:80.88px;font-size:6.6px;line-height:7.59px;color:#444;transform:scaleX(0.9);transform-origin:0 0">Musikgeschäft Schütz</div>
<div class="t" style="left:531.40px;top:80.88px;font-size:6.6px;line-height:7.59px;color:#444;transform:scaleX(0.9);transform-origin:0 0">LP</div>
<div style="left:0;top:101.75px;width:595px;height:1px;background:#e2e2e2"></div>
<div class="t" style="left:5.90px;top:92.23px;font-size:6.6px;line-height:7.59px;color:#555;transform:scaleX(0.9);transform-origin:0 0">9</div>
<div class="t" style="left:-30.50px;width:120px;text-align:right;top:92.23px;font-size:6.6px;line-height:7.59px;color:#444"><span style="display:inline-block;transform:scaleX(0.9);transform-origin:100% 0">01.02.2010</span></div>
<div class="t" style="left:94.60px;top:92.23px;font-size:6.6px;line-height:7.59px;color:#444;transform:scaleX(0.9);transform-origin:0 0">01</div>
<div class="t" style="left:162.80px;top:92.23px;font-size:6.6px;line-height:7.59px;color:#444;transform:scaleX(0.9);transform-origin:0 0">536039</div>
<div class="t" style="left:190.60px;width:120px;text-align:right;top:92.23px;font-size:6.6px;line-height:7.59px;color:#444"><span style="display:inline-block;transform:scaleX(0.9);transform-origin:100% 0">21.01.2010</span></div>
<div class="t" style="left:275.00px;width:120px;text-align:right;top:92.23px;font-size:6.6px;line-height:7.59px;color:#444"><span style="display:inline-block;transform:scaleX(0.9);transform-origin:100% 0">11887</span></div>
<div class="t" style="left:400.10px;top:92.23px;font-size:6.6px;line-height:7.59px;color:#444;transform:scaleX(0.9);transform-origin:0 0">Karl Schütz</div>
<div class="t" style="left:453.20px;top:92.23px;font-size:6.6px;line-height:7.59px;color:#444;transform:scaleX(0.9);transform-origin:0 0">Musikgeschäft Schütz</div>
<div class="t" style="left:531.40px;top:92.23px;font-size:6.6px;line-height:7.59px;color:#444;transform:scaleX(0.9);transform-origin:0 0">DVD</div>
<div style="left:0;top:113.10px;width:595px;height:1px;background:#e2e2e2"></div>
<div class="t" style="left:4.39px;top:103.58px;font-size:6.6px;line-height:7.59px;color:#555;transform:scaleX(0.9);transform-origin:0 0">10</div>
<div class="t" style="left:-30.50px;width:120px;text-align:right;top:103.58px;font-size:6.6px;line-height:7.59px;color:#444"><span style="display:inline-block;transform:scaleX(0.9);transform-origin:100% 0">01.02.2010</span></div>
<div class="t" style="left:94.60px;top:103.58px;font-size:6.6px;line-height:7.59px;color:#444;transform:scaleX(0.9);transform-origin:0 0">02</div>
<div class="t" style="left:162.80px;top:103.58px;font-size:6.6px;line-height:7.59px;color:#444;transform:scaleX(0.9);transform-origin:0 0">536020</div>
<div class="t" style="left:190.60px;width:120px;text-align:right;top:103.58px;font-size:6.6px;line-height:7.59px;color:#444"><span style="display:inline-block;transform:scaleX(0.9);transform-origin:100% 0">08.01.2010</span></div>
<div class="t" style="left:275.00px;width:120px;text-align:right;top:103.58px;font-size:6.6px;line-height:7.59px;color:#444"><span style="display:inline-block;transform:scaleX(0.9);transform-origin:100% 0">10929</span></div>
<div class="t" style="left:400.10px;top:103.58px;font-size:6.6px;line-height:7.59px;color:#444;transform:scaleX(0.9);transform-origin:0 0">Thomas Kurze</div>
<div class="t" style="left:453.20px;top:103.58px;font-size:6.6px;line-height:7.59px;color:#444;transform:scaleX(0.9);transform-origin:0 0">Die Melodie</div>
<div class="t" style="left:531.40px;top:103.58px;font-size:6.6px;line-height:7.59px;color:#444;transform:scaleX(0.9);transform-origin:0 0">CD</div>
<div style="left:0;top:124.45px;width:595px;height:1px;background:#e2e2e2"></div>
<div class="t" style="left:4.39px;top:114.93px;font-size:6.6px;line-height:7.59px;color:#555;transform:scaleX(0.9);transform-origin:0 0">11</div>
<div class="t" style="left:-30.50px;width:120px;text-align:right;top:114.93px;font-size:6.6px;line-height:7.59px;color:#444"><span style="display:inline-block;transform:scaleX(0.9);transform-origin:100% 0">01.02.2010</span></div>
<div class="t" style="left:94.60px;top:114.93px;font-size:6.6px;line-height:7.59px;color:#444;transform:scaleX(0.9);transform-origin:0 0">02</div>
<div class="t" style="left:162.80px;top:114.93px;font-size:6.6px;line-height:7.59px;color:#444;transform:scaleX(0.9);transform-origin:0 0">536020</div>
<div class="t" style="left:190.60px;width:120px;text-align:right;top:114.93px;font-size:6.6px;line-height:7.59px;color:#444"><span style="display:inline-block;transform:scaleX(0.9);transform-origin:100% 0">08.01.2010</span></div>
<div class="t" style="left:275.00px;width:120px;text-align:right;top:114.93px;font-size:6.6px;line-height:7.59px;color:#444"><span style="display:inline-block;transform:scaleX(0.9);transform-origin:100% 0">10929</span></div>
<div class="t" style="left:400.10px;top:114.93px;font-size:6.6px;line-height:7.59px;color:#444;transform:scaleX(0.9);transform-origin:0 0">Thomas Kurze</div>
<div class="t" style="left:453.20px;top:114.93px;font-size:6.6px;line-height:7.59px;color:#444;transform:scaleX(0.9);transform-origin:0 0">Die Melodie</div>
<div class="t" style="left:531.40px;top:114.93px;font-size:6.6px;line-height:7.59px;color:#444;transform:scaleX(0.9);transform-origin:0 0"></div>
<div style="left:0;top:135.80px;width:595px;height:1px;background:#e2e2e2"></div>
<div class="t" style="left:4.39px;top:126.28px;font-size:6.6px;line-height:7.59px;color:#555;transform:scaleX(0.9);transform-origin:0 0">12</div>
<div class="t" style="left:-30.50px;width:120px;text-align:right;top:126.28px;font-size:6.6px;line-height:7.59px;color:#444"><span style="display:inline-block;transform:scaleX(0.9);transform-origin:100% 0">01.02.2010</span></div>
<div class="t" style="left:94.60px;top:126.28px;font-size:6.6px;line-height:7.59px;color:#444;transform:scaleX(0.9);transform-origin:0 0">02</div>
<div class="t" style="left:162.80px;top:126.28px;font-size:6.6px;line-height:7.59px;color:#444;transform:scaleX(0.9);transform-origin:0 0">536020</div>
<div class="t" style="left:190.60px;width:120px;text-align:right;top:126.28px;font-size:6.6px;line-height:7.59px;color:#444"><span style="display:inline-block;transform:scaleX(0.9);transform-origin:100% 0">08.01.2010</span></div>
<div class="t" style="left:275.00px;width:120px;text-align:right;top:126.28px;font-size:6.6px;line-height:7.59px;color:#444"><span style="display:inline-block;transform:scaleX(0.9);transform-origin:100% 0">10929</span></div>
<div class="t" style="left:400.10px;top:126.28px;font-size:6.6px;line-height:7.59px;color:#444;transform:scaleX(0.9);transform-origin:0 0">Thomas Kurze</div>
<div class="t" style="left:453.20px;top:126.28px;font-size:6.6px;line-height:7.59px;color:#444;transform:scaleX(0.9);transform-origin:0 0">Die Melodie</div>
<div class="t" style="left:531.40px;top:126.28px;font-size:6.6px;line-height:7.59px;color:#444;transform:scaleX(0.9);transform-origin:0 0"></div>
<div style="left:0;top:147.15px;width:595px;height:1px;background:#e2e2e2"></div>
<div class="t" style="left:4.39px;top:137.63px;font-size:6.6px;line-height:7.59px;color:#555;transform:scaleX(0.9);transform-origin:0 0">13</div>
<div class="t" style="left:-30.50px;width:120px;text-align:right;top:137.63px;font-size:6.6px;line-height:7.59px;color:#444"><span style="display:inline-block;transform:scaleX(0.9);transform-origin:100% 0">01.02.2010</span></div>
<div class="t" style="left:94.60px;top:137.63px;font-size:6.6px;line-height:7.59px;color:#444;transform:scaleX(0.9);transform-origin:0 0">02</div>
<div class="t" style="left:162.80px;top:137.63px;font-size:6.6px;line-height:7.59px;color:#444;transform:scaleX(0.9);transform-origin:0 0">536020</div>
<div class="t" style="left:190.60px;width:120px;text-align:right;top:137.63px;font-size:6.6px;line-height:7.59px;color:#444"><span style="display:inline-block;transform:scaleX(0.9);transform-origin:100% 0">08.01.2010</span></div>
<div class="t" style="left:275.00px;width:120px;text-align:right;top:137.63px;font-size:6.6px;line-height:7.59px;color:#444"><span style="display:inline-block;transform:scaleX(0.9);transform-origin:100% 0">10929</span></div>
<div class="t" style="left:400.10px;top:137.63px;font-size:6.6px;line-height:7.59px;color:#444;transform:scaleX(0.9);transform-origin:0 0">Thomas Kurze</div>
<div class="t" style="left:453.20px;top:137.63px;font-size:6.6px;line-height:7.59px;color:#444;transform:scaleX(0.9);transform-origin:0 0">Die Melodie</div>
<div class="t" style="left:531.40px;top:137.63px;font-size:6.6px;line-height:7.59px;color:#444;transform:scaleX(0.9);transform-origin:0 0">SACD</div>
<div style="left:13.70px;top:0;width:1px;height:142px;background:#e2e2e2"></div>
<div style="left:91.70px;top:0;width:1px;height:142px;background:#e2e2e2"></div>
<div style="left:159.90px;top:0;width:1px;height:142px;background:#e2e2e2"></div>
<div style="left:245.10px;top:0;width:1px;height:142px;background:#e2e2e2"></div>
<div style="left:313.10px;top:0;width:1px;height:142px;background:#e2e2e2"></div>
<div style="left:397.70px;top:0;width:1px;height:142px;background:#e2e2e2"></div>
<div style="left:450.00px;top:0;width:1px;height:142px;background:#e2e2e2"></div>
<div style="left:529.50px;top:0;width:1px;height:142px;background:#e2e2e2"></div>
<div style="left:581.50px;top:0;width:1px;height:142px;background:#e2e2e2"></div>
<div style="left:595.00px;top:0;width:1px;height:142px;background:#e2e2e2"></div>
</div>
<div style="left:891.5px;top:405px;width:5px;height:158.7px;background:#e8e8e8"></div>
<div style="left:891.3px;top:408.2px;width:6.5px;height:9px;background:#fff;border:1px solid #d8d8d8"></div>
<div style="left:891.3px;top:417.6px;width:6.5px;height:6.4px;background:#fff;border:1px solid #d8d8d8"></div>
<svg style="left:0;top:0" width="1" height="1"><path d="M892.6 413.9 L894.6 411.6 L896.6 413.9 Z" fill="#333"/></svg>
<div style="left:891.6px;top:553.3px;width:6px;height:9.6px;background:#fff;border:1px solid #d0d0d0"></div>
<svg style="left:0;top:0" width="1" height="1"><path d="M893.2 557.3 L895.2 559.5 L897.2 557.3 Z" fill="#555"/></svg>
<div style="left:296.5px;top:563.7px;width:595px;height:8px;background:#e6e6e6"></div>
<div style="left:296.5px;top:563.7px;width:13.2px;height:8.4px;background:#fff;border:1px solid #d0d0d0"></div>
<div style="left:309.7px;top:563.7px;width:372.6px;height:8px;background:#fff;border-right:1px solid #c8c8c8"></div>
<div style="left:881.7px;top:563.7px;width:9.3px;height:8.4px;background:#fff;border:1px solid #d0d0d0"></div>
<svg style="left:0;top:0" width="1" height="1"><path d="M302.4 565.7 L300.2 567.9 L302.4 570.1 Z M885.5 565.7 L887.7 567.9 L885.5 570.1 Z" fill="#555"/></svg>
<div style="left:877px;top:571.7px;width:23px;height:17.3px;background:#2e6496"></div>
<svg style="left:0;top:0" width="1" height="1"><path d="M883.2 575.4 H894 M883.2 585.4 H894" stroke="#c8d6e4" stroke-width="0.8"/><path d="M888.6 577.6 V583.3 M887 578.8 L888.6 577.2 L890.2 578.8 M887 582.2 L888.6 583.8 L890.2 582.2" fill="none" stroke="#c8d6e4" stroke-width="0.7"/></svg>
<div style="left:294px;top:573px;width:604.2px;height:2px;background:#e8121e"></div>
<div style="left:896.2px;top:381.2px;width:2px;height:193.8px;background:#e8121e"></div></body></html>
